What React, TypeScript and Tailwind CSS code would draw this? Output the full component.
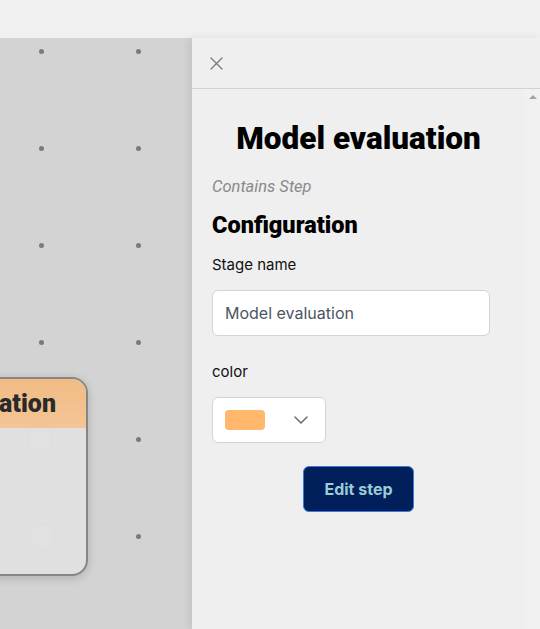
import React from "react";

const xs = [41, 138];
const ys = [13, 110, 207, 304, 401, 498];

export default function App() {
  return (
    <div className="w-[540px] h-[629px] bg-[#f0f0f0] flex flex-col overflow-hidden" style={{ fontFamily: "Roboto, 'Liberation Sans', sans-serif" }}>
      <div className="h-[38px] shrink-0 bg-[#f0f0f0]" />
      <div className="flex flex-1 min-h-0">
        <div className="relative w-[192px] shrink-0 bg-[#d3d3d3] overflow-hidden">
          {ys.map((y) =>
            xs.map((x) => (
              <div
                key={`${x}-${y}`}
                className="absolute w-[5px] h-[5px] rounded-full bg-[#7a7a7a]"
                style={{ left: x - 2.5, top: y - 2.5 }}
              />
            ))
          )}
          <div className="absolute left-[-113px] top-[339px] w-[201px] h-[199px] rounded-[16px] border-2 border-[#868686] bg-[#e0e0e0] overflow-hidden shadow-[0_2px_10px_rgba(0,0,0,0.18)]">
            <div className="h-[49px] bg-gradient-to-b from-[#f1bb84] to-[#f4c596] flex items-center justify-end pr-[30px] overflow-hidden">
              <span className="shrink-0 whitespace-nowrap text-[25px] font-black text-[#2a2a2a] leading-none">Model evaluation</span>
            </div>
            <div className="absolute left-[139px] top-[49px] w-[24px] h-[24px] rounded-full bg-[#e1e1e1] shadow-[0_0_5px_rgba(0,0,0,0.025)]" />
            <div className="absolute left-[141px] top-[146px] w-[24px] h-[24px] rounded-full bg-[#e1e1e1] shadow-[0_0_5px_rgba(0,0,0,0.025)]" />
          </div>
        </div>
        <div className="flex-1 flex flex-col bg-[#efefef] shadow-[-3px_0_8px_rgba(0,0,0,0.08)] relative">
          <div className="h-[51px] shrink-0 border-b border-[#d2d2d2] flex items-center pl-[18px]">
            <svg width="13" height="13" viewBox="0 0 13 13" fill="none" stroke="#7a7a7a" strokeWidth="1.3" strokeLinecap="round">
              <path d="M1 1L12 12M12 1L1 12" />
            </svg>
          </div>
          <div className="flex flex-1 min-h-0">
            <div className="flex-1 px-5 pt-[32px]">
              <h1 className="text-[31.5px] leading-[36px] font-black text-black text-center">Model evaluation</h1>
              <p className="mt-[20px] text-[16.5px] leading-[20px] italic text-[#8a8a8a]">Contains Step</p>
              <h2 className="mt-[14px] text-[23.5px] leading-[28px] font-black text-black">Configuration</h2>
              <p className="mt-[16px] text-[15px] leading-[20px] text-[#111]" style={{ fontFamily: "Inter, sans-serif" }}>Stage name</p>
              <div className="mt-[15px] w-[278px] h-[46px] bg-white border border-[#d4d4d8] rounded-[6px] flex items-center px-[12px] text-[16px] text-[#4b5563]" style={{ fontFamily: "Inter, sans-serif" }}>
                Model evaluation
              </div>
              <p className="mt-[26px] text-[15px] leading-[20px] text-[#111]" style={{ fontFamily: "Inter, sans-serif" }}>color</p>
              <div className="mt-[15px] w-[114px] h-[46px] bg-white border border-[#d4d4d8] rounded-[6px] flex items-center pl-[12px]">
                <div className="w-[40px] h-[20px] rounded-[4px] bg-[#ffb86c]" />
                <svg className="ml-[29px]" width="14" height="8" viewBox="0 0 14 8" fill="none" stroke="#6b7280" strokeWidth="1.6" strokeLinecap="round" strokeLinejoin="round">
                  <path d="M1 1L7 7L13 1" />
                </svg>
              </div>
              <div className="mt-[23px] flex justify-center">
                <button className="w-[111px] h-[46px] rounded-[6px] bg-[#001f5b] border border-[#3b7be0] text-[16px] font-bold text-[#9ccbd4]" style={{ fontFamily: "Inter, sans-serif" }}>
                  Edit step
                </button>
              </div>
            </div>
            <div className="w-[15px] shrink-0 bg-[#f1f1f1] flex justify-center pt-[6px]">
              <div className="w-0 h-0 border-l-[4px] border-r-[4px] border-b-[4px] border-l-transparent border-r-transparent border-b-[#a3a3a3]" />
            </div>
          </div>
        </div>
      </div>
    </div>
  );
}
